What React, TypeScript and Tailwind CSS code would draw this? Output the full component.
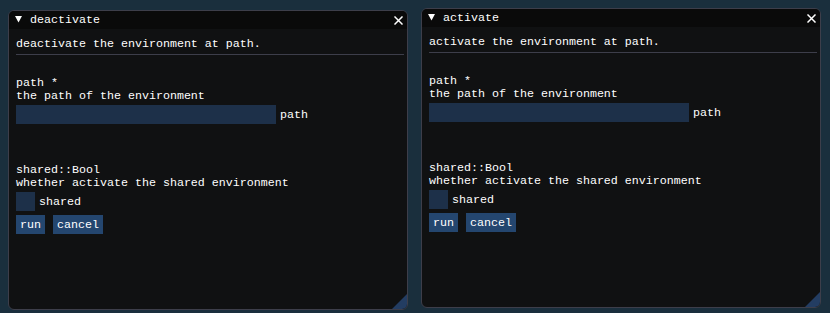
import React from 'react';

interface PanelProps {
  title: string;
  description: string;
  className: string;
}

// single 13px text row, glyphs nudged down to sit on the pixel-font baseline
const Line = ({ children, className = '' }: { children: React.ReactNode; className?: string }) => (
  <div className={`h-[13px] pt-px ${className}`}>{children}</div>
);

// one imgui-style window, positioned on the desktop by className
const Panel = ({ title, description, className }: PanelProps) => {
  return (
    <div
      className={`absolute flex h-[300px] w-[400px] flex-col overflow-hidden rounded-[6px] border border-[#3d3e4a] bg-[#101112] ${className}`}
    >
      {/* Title bar */}
      <div className="flex h-[18px] shrink-0 items-start bg-[#0a0a0a] pt-[2px]">
        <svg className="ml-[6px] mt-[3px]" width="7" height="7" viewBox="0 0 7 7">
          <polygon points="0,0 7,0 3.5,6.5" fill="#ffffff" />
        </svg>
        <span className="ml-[8px] pt-px">{title}</span>
        <svg className="ml-auto mr-[4px] mt-[3px]" width="9" height="9" viewBox="0 0 9 9">
          <path d="M1 1 L8 8 M8 1 L1 8" stroke="#ffffff" strokeWidth="1.5" strokeLinecap="square" fill="none" />
        </svg>
      </div>

      {/* Body */}
      <div className="flex flex-col px-[7px] pt-[8px]">
        <Line>{description}</Line>
        <div className="mt-[4px] h-px w-[388px] bg-[#3d3e4a]" />

        <Line className="mt-[21px]">path *</Line>
        <Line>the path of the environment</Line>
        <div className="mt-[3px] flex items-start">
          <div className="h-[19px] w-[260px] bg-[#1d3049]" />
          <span className="ml-[4px] pt-[4px]">path</span>
        </div>

        <Line className="mt-[39px]">shared::Bool</Line>
        <Line>whether activate the shared environment</Line>
        <div className="mt-[3px] flex items-start">
          <div className="h-[19px] w-[19px] bg-[#1d3049]" />
          <span className="ml-[4px] pt-[4px]">shared</span>
        </div>

        <div className="mt-[4px] flex gap-[8px]">
          <button className="h-[19px] bg-[#24466f] px-[4px] pt-[4px] pb-[2px] leading-[13px]">run</button>
          <button className="h-[19px] bg-[#24466f] px-[4px] pt-[4px] pb-[2px] leading-[13px]">cancel</button>
        </div>
      </div>

      {/* Resize grip */}
      <svg className="absolute bottom-0 right-0" width="15" height="15" viewBox="0 0 15 15">
        <polygon points="0,15 15,0 15,15" fill="#233d62" />
      </svg>
    </div>
  );
};

const App = () => {
  return (
    <div className="relative h-[313px] w-[830px] overflow-hidden bg-[#1a2f3d] font-['Liberation_Mono',monospace] text-[11.67px] leading-[13px] text-white">
      <Panel
        className="left-[8px] top-[10px]"
        title="deactivate"
        description="deactivate the environment at path."
      />
      <Panel
        className="left-[421px] top-[8px]"
        title="activate"
        description="activate the environment at path."
      />
    </div>
  );
};

export default App;
